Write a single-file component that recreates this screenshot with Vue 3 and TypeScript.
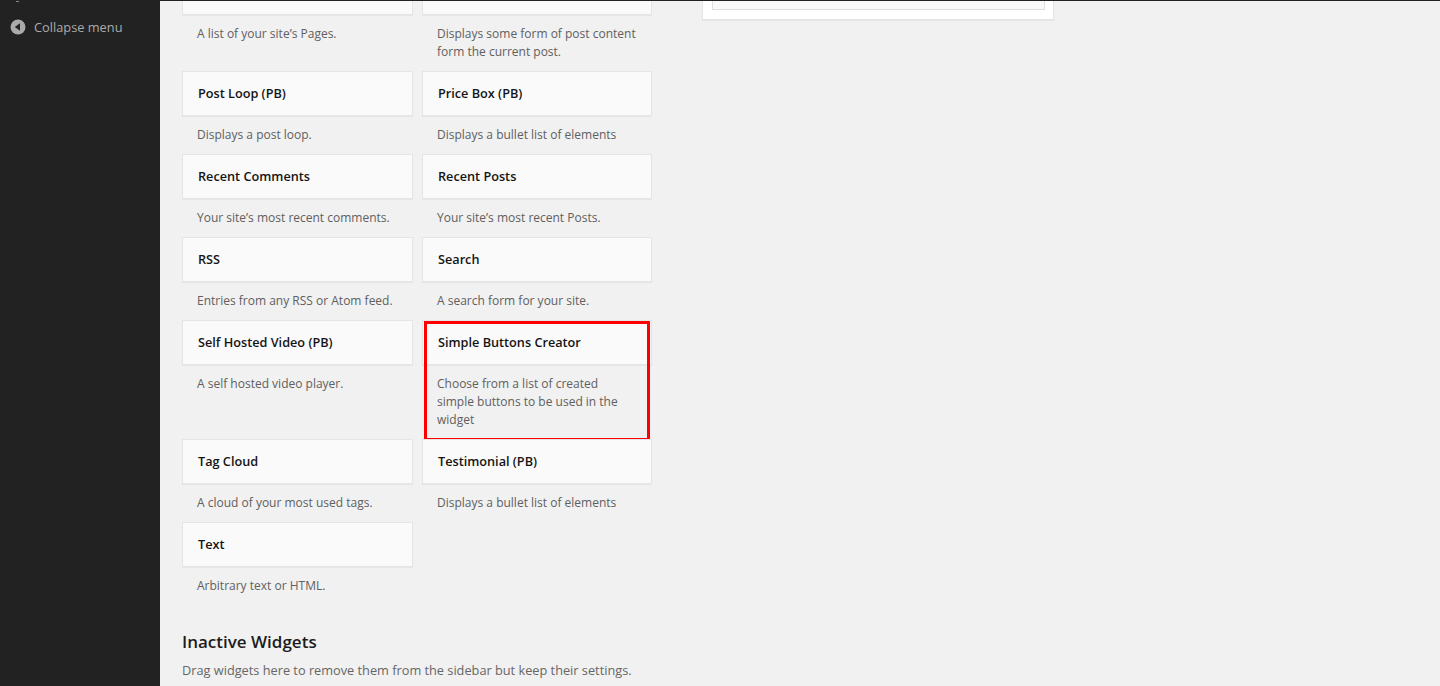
<script setup lang="ts">
interface Widget { title: string; desc: string; highlight?: boolean }
const widgets: Widget[] = [
  { title: '', desc: 'A list of your site’s Pages.' },
  { title: '', desc: 'Displays some form of post content form the current post.' },
  { title: 'Post Loop (PB)', desc: 'Displays a post loop.' },
  { title: 'Price Box (PB)', desc: 'Displays a bullet list of elements' },
  { title: 'Recent Comments', desc: 'Your site’s most recent comments.' },
  { title: 'Recent Posts', desc: 'Your site’s most recent Posts.' },
  { title: 'RSS', desc: 'Entries from any RSS or Atom feed.' },
  { title: 'Search', desc: 'A search form for your site.' },
  { title: 'Self Hosted Video (PB)', desc: 'A self hosted video player.' },
  { title: 'Simple Buttons Creator', desc: 'Choose from a list of created simple buttons to be used in the widget', highlight: true },
  { title: 'Tag Cloud', desc: 'A cloud of your most used tags.' },
  { title: 'Testimonial (PB)', desc: 'Displays a bullet list of elements' },
  { title: 'Text', desc: 'Arbitrary text or HTML.' },
]
</script>

<template>
  <div class="page">
    <aside class="sidebar">
      <div class="tick"></div>
      <div class="collapse">
        <svg class="collapse-icon" width="16" height="16" viewBox="0 0 16 16" aria-hidden="true">
          <circle cx="8" cy="8" r="7.5" fill="#aaa" />
          <path d="M10 4.2v7.6L4.8 8z" fill="#222" />
        </svg>
        <span>Collapse menu</span>
      </div>
    </aside>
    <main class="main">
      <section class="left">
        <div class="grid">
          <div v-for="w in widgets" :key="w.desc + w.title" class="widget">
            <div class="card">{{ w.title }}</div>
            <p class="desc">{{ w.desc }}</p>
            <div v-if="w.highlight" class="mark"></div>
          </div>
        </div>
        <h2 class="heading">Inactive Widgets</h2>
        <p class="note">Drag widgets here to remove them from the sidebar but keep their settings.</p>
      </section>
      <section class="panel">
        <div class="panel-inner"></div>
      </section>
    </main>
  </div>
</template>

<style>
html, body { margin: 0; background: #f1f1f1; }
</style>

<style scoped>
.page {
  display: flex;
  height: 686px;
  overflow: hidden;
  background: #f1f1f1;
  font-family: "Open Sans", sans-serif;
  border-top: 1px solid #222;
  box-sizing: border-box;
}
.sidebar {
  width: 160px;
  flex: none;
  background: #222;
  color: #aaa;
  font-size: 12.8px;
}
.tick { width: 3px; height: 1px; margin-left: 16px; background: #888; }
.collapse {
  display: flex;
  align-items: center;
  gap: 8px;
  margin-top: 16px;
  padding-left: 10px;
  height: 18px;
  line-height: 18px;
}
.collapse-icon { flex: none; }
.main { display: flex; align-items: flex-start; padding-left: 22px; }
.left { width: 470px; flex: none; margin-top: -31px; }
.grid {
  display: grid;
  grid-template-columns: 231px 230px;
  column-gap: 9px;
}
.widget { position: relative; }
.card {
  box-sizing: border-box;
  height: 45px;
  padding: 0 15px;
  line-height: 43px;
  font-size: 12.7px;
  font-weight: 600;
  color: #141414;
  background: #fafafa;
  border: 1px solid #e5e5e5;
  box-shadow: 0 1px 1px rgba(0, 0, 0, 0.04);
}
.desc {
  margin: 0;
  padding: 10px 15px 10px;
  font-size: 12px;
  line-height: 18px;
  color: #606060;
}
.mark {
  position: absolute;
  left: 2px;
  right: 2px;
  top: 1px;
  bottom: -2px;
  border: 3px solid #f00;
  pointer-events: none;
}
.heading {
  margin: 25px 0 0;
  font-size: 17px;
  line-height: 24px;
  font-weight: 600;
  color: #1c1c1c;
}
.note {
  margin: 6px 0 0;
  font-size: 12.75px;
  line-height: 20px;
  color: #666;
}
.panel {
  box-sizing: border-box;
  width: 352px;
  height: 19px;
  margin-left: 50px;
  padding: 0 8px 10px 9px;
  background: #fff;
  border: 1px solid #e5e5e5;
  border-top: 0;
  box-shadow: 0 1px 1px rgba(0, 0, 0, 0.04);
}
.panel-inner {
  height: 9px;
  background: #f9f9f9;
  border: 1px solid #dfdfdf;
  border-top: 0;
  box-sizing: border-box;
}
</style>
